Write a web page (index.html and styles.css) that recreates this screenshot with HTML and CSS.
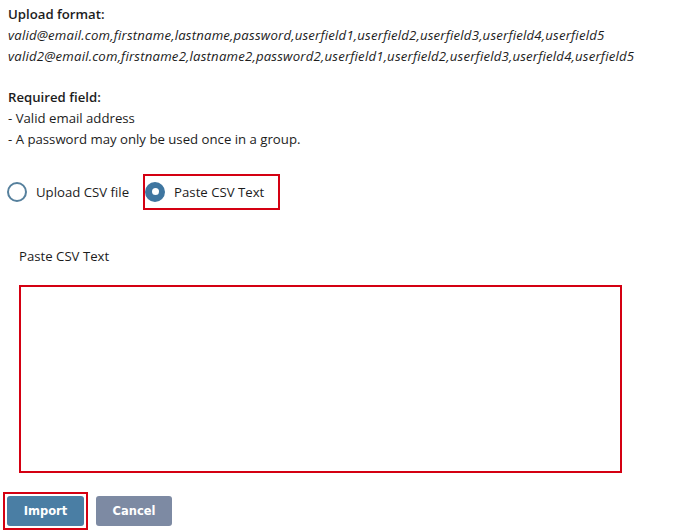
FILE: index.html
```html
<!DOCTYPE html>
<html>
<head>
<meta charset="utf-8">
<link rel="stylesheet" href="styles.css">
</head>
<body>
<div class="page">
  <div class="info">
    <div class="strong">Upload format:</div>
    <div class="em">valid@email.com,firstname,lastname,password,userfield1,userfield2,userfield3,userfield4,userfield5</div>
    <div class="em">valid2@email.com,firstname2,lastname2,password2,userfield1,userfield2,userfield3,userfield4,userfield5</div>
    <div class="blank">&nbsp;</div>
    <div class="strong">Required field:</div>
    <div>- Valid email address</div>
    <div>- A password may only be used once in a group.</div>
  </div>
  <div class="choices">
    <label class="option">
      <span class="radio"></span>
      <span class="opt-text">Upload CSV file</span>
    </label>
    <label class="option selected">
      <span class="radio checked"></span>
      <span class="opt-text">Paste CSV Text</span>
    </label>
  </div>
  <div class="field">
    <div class="field-label">Paste CSV Text</div>
    <textarea class="csv"></textarea>
  </div>
  <div class="actions">
    <span class="focus-ring"><button class="btn primary">Import</button></span>
    <button class="btn secondary">Cancel</button>
  </div>
</div>
</body>
</html>
```
FILE: styles.css
```css
html, body {
  margin: 0;
  padding: 0;
  background: #ffffff;
}
.page {
  font-family: "Open Sans", "Liberation Sans", sans-serif;
  font-size: 13.2px;
  color: #1c1c1c;
  padding: 4px 0 0 8px;
}
.info div {
  line-height: 20.8px;
  white-space: nowrap;
}
.info .strong {
  font-weight: 600;
}
.info .em {
  font-style: italic;
  letter-spacing: 0.19px;
}
.choices {
  display: flex;
  align-items: center;
  margin-top: 24px;
  margin-left: -3px;
}
.option {
  display: flex;
  align-items: center;
  height: 32px;
  border: 2px solid transparent;
  padding: 0 11px 0 0;
  margin-right: 1px;
}
.option.selected {
  border-color: #d40012;
  padding-right: 14px;
}
.radio {
  width: 20px;
  height: 20px;
  box-sizing: border-box;
  border-radius: 50%;
  border: 2px solid #56809d;
  background: #fff;
  margin-right: 9px;
  display: flex;
  align-items: center;
  justify-content: center;
}
.radio.checked {
  border-color: #3f76a0;
  background: #3f76a0;
}
.radio.checked::after {
  content: "";
  width: 7px;
  height: 7px;
  border-radius: 50%;
  background: #fff;
}
.field {
  margin-top: 36px;
  padding-left: 11px;
}
.field-label {
  line-height: 20px;
  margin-bottom: 19px;
}
.csv {
  display: block;
  width: 603px;
  height: 188px;
  box-sizing: border-box;
  border: 2px solid #d40012;
  margin: 0;
  resize: none;
  background: #fff;
}
.actions {
  display: flex;
  align-items: center;
  gap: 8px;
  margin-top: 19px;
  margin-left: -5px;
}
.focus-ring {
  display: flex;
  border: 2px solid #d40012;
  padding: 2px;
}
.btn {
  font-family: "DejaVu Sans", Verdana, sans-serif;
  font-weight: bold;
  font-size: 11.5px;
  color: #fff;
  border: none;
  border-radius: 3px;
  height: 30px;
  padding: 0;
}
.primary {
  width: 77px;
  background: #4a7ea4;
}
.secondary {
  width: 76px;
  background: #7d8aa3;
}
```
